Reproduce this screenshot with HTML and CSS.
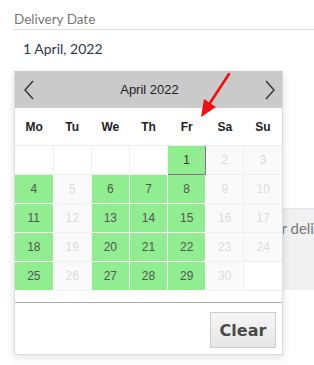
FILE: index.html
```html
<!DOCTYPE html>
<html lang="en">
<head>
  <meta charset="UTF-8">
  <title>Delivery Date</title>
  <link rel="stylesheet" href="styles.css">
</head>
<body>

<div class="field">
  <div class="field-label">Delivery Date</div>
  <div class="field-input">1 April, 2022</div>

  <div class="notice">for delivery</div>

  <!-- datepicker popup -->
  <div class="picker">
    <div class="picker-head">
      <svg class="nav" width="12" height="20" viewBox="0 0 12 20"><polyline points="10,1 2,10 10,19" fill="none" stroke="#333" stroke-width="1.4"/></svg>
      <span class="picker-title">April 2022</span>
      <svg class="nav" width="12" height="20" viewBox="0 0 12 20"><polyline points="2,1 10,10 2,19" fill="none" stroke="#333" stroke-width="1.4"/></svg>
    </div>
    <table class="days">
      <thead>
        <tr><th>Mo</th><th>Tu</th><th>We</th><th>Th</th><th>Fr</th><th>Sa</th><th>Su</th></tr>
      </thead>
      <tbody id="dayRows"></tbody>
    </table>
    <div class="picker-gap"></div>
    <div class="picker-foot">
      <button class="clear-btn">Clear</button>
    </div>
  </div>

  <svg class="pointer" width="40" height="50" viewBox="0 0 40 50">
    <line x1="36" y1="2" x2="15" y2="34" stroke="#f01010" stroke-width="2.6" stroke-linecap="round"/>
    <polygon points="8,45 11,27 23,35" fill="#f01010"/>
  </svg>
</div>

<script>
  const open = [1, 4, 6, 7, 8, 11, 13, 14, 15, 18, 20, 21, 22, 25, 27, 28, 29];
  const rows = document.getElementById('dayRows');
  let day = 1 - 4; // April 2022 starts on a Friday
  for (let r = 0; r < 5; r++) {
    const tr = document.createElement('tr');
    for (let c = 0; c < 7; c++, day++) {
      const td = document.createElement('td');
      if (day >= 1 && day <= 30) {
        td.textContent = day;
        td.className = open.includes(day) ? 'open' : 'off';
        if (day === 1) td.className += ' picked';
      }
      tr.appendChild(td);
    }
    rows.appendChild(tr);
  }
</script>
</body>
</html>
```

FILE: styles.css
```css
body {
  margin: 0;
  min-height: 365px;
  background: #fff;
  font-family: Lato, "Open Sans", sans-serif;
}
.field {
  position: relative;
  padding-left: 14px;
  padding-bottom: 80px;
}
.field-label {
  padding-top: 9px;
  line-height: 20px;
  font-size: 13.5px;
  color: #777;
}
.field-input {
  border-top: 1px solid #ddd;
  padding: 8px 0 11px 9px;
  line-height: 22px;
  font-size: 14px;
  color: #2d3a4e;
}
.notice {
  margin-top: 137px;
  height: 82px;
  background: #f1f1f1;
  border-top: 1px solid #e6e6e6;
  padding: 9px 0 0 254px;
  line-height: 20px;
  font-size: 15px;
  color: #777;
  white-space: nowrap;
  overflow: hidden;
  box-sizing: border-box;
}
.picker {
  position: absolute;
  top: 71px;
  left: 14px;
  width: 269px;
  box-sizing: border-box;
  background: #fff;
  border: 1px solid #ddd;
  border-top: 0;
  box-shadow: 0 2px 8px rgba(0, 0, 0, 0.13);
  font-family: "Liberation Sans", Arial, sans-serif;
}
.picker-head {
  display: flex;
  align-items: center;
  justify-content: space-between;
  height: 37px;
  padding: 0 6px 0 8px;
  background: #cacaca;
}
.picker-title {
  font-size: 13px;
  color: #222;
}
.days {
  width: 100%;
  table-layout: fixed;
  border-collapse: collapse;
}
.days th {
  height: 37px;
  padding: 0;
  font-size: 12px;
  font-weight: bold;
  color: #222;
  border-bottom: 1px solid #eee;
}
.days td {
  height: 28px;
  padding: 0;
  text-align: center;
  font-size: 12px;
  border: 1px solid #f0f0f0;
}
.days tr td:first-child { border-left: 0; }
.days tr td:last-child { border-right: 0; }
.days td.open {
  background: #90ee90;
  color: #555;
  border-color: #fff;
}
.days td.off {
  background: #fafafa;
  color: #dcdcdc;
}
.days td.picked {
  border: 1px solid #a0629f;
  color: #333;
}
.picker-gap {
  height: 11px;
  border-bottom: 1px solid #aaa;
}
.picker-foot {
  display: flex;
  justify-content: flex-end;
  padding: 9px 6px 6px 0;
}
.clear-btn {
  width: 66px;
  height: 36px;
  border: 1px solid #ccc;
  background: linear-gradient(#f6f6f6, #e6e6e6);
  font-family: "DejaVu Sans", sans-serif;
  font-weight: bold;
  font-size: 16px;
  color: #4a4a4a;
  padding: 0;
}
.pointer {
  position: absolute;
  top: 72px;
  left: 193px;
}
```
